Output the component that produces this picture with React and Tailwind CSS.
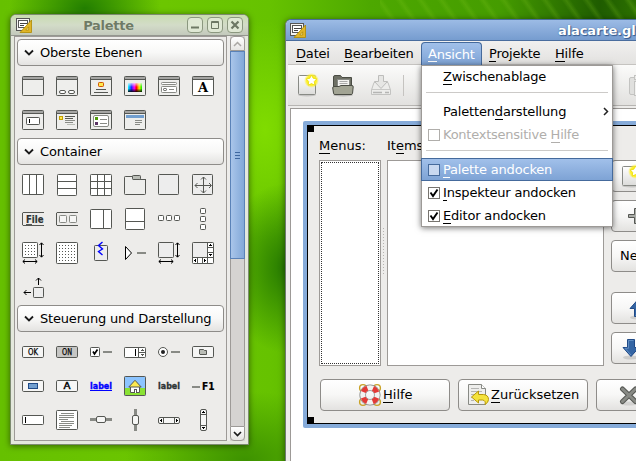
import React from "react";

const INK = "#555753";

/* ---------- palette icons, each drawn in a 34x34 cell ---------- */

const Box = ({ x, y, w, h, fill = "none", stroke = INK, r = 0.8 }) => (
  <rect x={x + 0.5} y={y + 0.5} width={w - 1} height={h - 1} rx={r} fill={fill} stroke={stroke} />
);
const Bar = ({ x, y, w, h = 1, fill = INK }) => (
  <rect x={x} y={y} width={w} height={h} fill={fill} shapeRendering="crispEdges" />
);
const Frame = ({ fill = "#eeeeec", children }) => (
  <>
    <Box x={6} y={7} w={22} h={20} fill={fill} />
    <Bar x={7} y={8} w={20} h={2} fill="#a5a5a3" />
    <Bar x={7} y={10} w={20} />
    {children}
  </>
);
const Label = ({ x, y, size, children, fill = "#2e3436", bold = true, length, weight = 0 }) => (
  <text
    x={x}
    y={y}
    fontSize={size}
    fontWeight={bold ? 700 : 400}
    fill={fill}
    stroke={fill}
    strokeWidth={weight}
    fontFamily="DejaVu Sans, sans-serif"
    textLength={length}
    lengthAdjust="spacingAndGlyphs"
  >
    {children}
  </text>
);
const Dots = ({ x, y, n }) => {
  const out = [];
  for (let i = 0; i < n; i++)
    for (let j = 0; j < n; j++) out.push(<Bar key={i + "-" + j} x={x + i * 3} y={y + j * 3} w={1} />);
  return <>{out}</>;
};
const VArrow = ({ x, y, h }) => (
  <path
    d={`M${x} ${y + 1}V${y + h - 1}M${x - 2} ${y + 3}L${x} ${y + 0.8}L${x + 2} ${y + 3}M${x - 2} ${y + h - 3}L${x} ${y + h - 0.8}L${x + 2} ${y + h - 3}`}
    fill="none"
    stroke="#000"
  />
);
const HArrow = ({ x, y, w }) => (
  <path
    d={`M${x + 1} ${y}H${x + w - 1}M${x + 3} ${y - 2}L${x + 0.8} ${y}L${x + 3} ${y + 2}M${x + w - 3} ${y - 2}L${x + w - 0.8} ${y}L${x + w - 3} ${y + 2}`}
    fill="none"
    stroke="#000"
  />
);

const topLevel = [
  <Frame />,
  <Frame>
    <Box x={9} y={21} w={7} h={4} fill="#fff" r={1.5} />
    <Box x={18} y={21} w={7} h={4} fill="#fff" r={1.5} />
  </Frame>,
  <Frame>
    <Box x={14} y={13} w={6} h={5} fill="#fce94f" stroke="#d35400" />
    <Bar x={12} y={20} w={10} />
    <Bar x={10} y={23} w={14} />
  </Frame>,
  <Frame>
    <defs>
      <linearGradient id="hue">
        <stop offset="0" stopColor="#0ff" />
        <stop offset="0.25" stopColor="#22f" />
        <stop offset="0.45" stopColor="#f0f" />
        <stop offset="0.6" stopColor="#f00" />
        <stop offset="0.8" stopColor="#fe0" />
        <stop offset="1" stopColor="#0e0" />
      </linearGradient>
      <linearGradient id="dark" x2="0" y2="1">
        <stop offset="0" stopColor="#fff" stopOpacity=".75" />
        <stop offset="0.45" stopColor="#fff" stopOpacity="0" />
        <stop offset="0.6" stopColor="#000" stopOpacity="0" />
        <stop offset="1" stopColor="#000" stopOpacity=".9" />
      </linearGradient>
    </defs>
    <rect x="10" y="14" width="14" height="9" fill="url(#hue)" />
    <rect x="10" y="14" width="14" height="9" fill="url(#dark)" />
  </Frame>,
  <Frame>
    <Box x={9} y={13} w={16} h={3} fill="#fff" stroke="#888a85" />
    <Box x={9} y={17} w={16} h={7} fill="#fff" stroke="#888a85" />
    <Box x={11} y={19} w={4} h={3} fill="#fff" />
    <Bar x={17} y={20} w={5} fill="#888a85" />
  </Frame>,
  <Frame fill="#fff">
    <text x="17" y="23" fontSize="13" fontWeight="700" textAnchor="middle" fontFamily="DejaVu Serif, serif" fill="#000">
      A
    </text>
  </Frame>,
  <Frame>
    <Box x={10} y={14} w={14} h={8} fill="#fff" />
    <Bar x={13} y={16} w={1} h={4} fill="#000" />
  </Frame>,
  <Frame>
    <Box x={9} y={13} w={4} h={4} fill="#fce94f" stroke="#c4a000" r={0} />
    <Bar x={15} y={13} w={10} />
    <Bar x={15} y={15} w={8} />
    <Bar x={15} y={17} w={10} fill="#888a85" />
    <Bar x={15} y={19} w={8} fill="#888a85" />
    <Bar x={17} y={21} w={8} fill="#babdb6" />
  </Frame>,
  <Frame>
    <Box x={9} y={12} w={16} h={12} fill="#fff" stroke="#888a85" r={1.5} />
    <Bar x={11} y={14} w={3} h={3} fill="#4e9a06" />
    <Bar x={11} y={19} w={3} h={3} fill="#5c3566" />
    <Bar x={16} y={16} w={7} fill="#888a85" />
    <Bar x={16} y={20} w={7} fill="#888a85" />
  </Frame>,
  <Frame>
    <Bar x={8} y={12} w={18} h={3} fill="#729fcf" />
    <Bar x={17} y={17} w={7} fill="#888a85" />
    <Bar x={17} y={19} w={7} fill="#888a85" />
    <Bar x={17} y={21} w={5} fill="#888a85" />
  </Frame>,
];

const container = [
  <>
    <Box x={6} y={6} w={22} h={21} fill="#fff" />
    <Bar x={13} y={7} w={1} h={19} />
    <Bar x={20} y={7} w={1} h={19} />
  </>,
  <>
    <Box x={7} y={6} w={20} h={22} fill="#fff" />
    <Bar x={8} y={13} w={18} />
    <Bar x={8} y={20} w={18} />
  </>,
  <>
    <Box x={6} y={6} w={22} h={22} fill="#fff" />
    <Bar x={13} y={7} w={1} h={20} />
    <Bar x={20} y={7} w={1} h={20} />
    <Bar x={7} y={13} w={20} />
    <Bar x={7} y={20} w={20} />
  </>,
  <>
    <Box x={6} y={8} w={22} h={19} fill="#eeeeec" />
    <Bar x={15} y={7} w={13} h={4} fill="#edecea" />
    <Bar x={15} y={11} w={12} />
    <Bar x={27} y={12} w={1} h={3} />
    <Box x={14} y={7} w={9} h={5} fill="#babdb6" />
  </>,
  <Box x={6} y={6} w={21} h={21} fill="#ededed" />,
  <>
    <Box x={6} y={6} w={21} h={21} fill="#ededed" />
    <path
      d="M17.5 9V25M9 17.5H25M15 11.5L17.5 9L20 11.5M15 22.5L17.5 25L20 22.5M11.5 15L9 17.5L11.5 20M23 15L25.5 17.5L23 20"
      stroke={INK}
      fill="none"
    />
  </>,
  <>
    <path d="M28 10.5H7L6.5 11V23L7 23.5H28" fill="none" stroke={INK} />
    <Label x={10} y={21} size={10} length={17.5} weight={0.2}>
      File
    </Label>
    <Bar x={10} y={22} w={6} />
  </>,
  <>
    <path d="M28 10.5H7L6.5 11V23L7 23.5H28" fill="none" stroke={INK} />
    <Box x={9} y={13} w={8} h={8} stroke="#888a85" fill="#f6f6f5" />
    <Box x={19} y={13} w={8} h={8} stroke="#888a85" fill="#f6f6f5" />
  </>,
  <>
    <Box x={6} y={7} w={22} h={20} fill="#fff" />
    <Bar x={19} y={8} w={1} h={18} />
  </>,
  <>
    <Box x={7} y={6} w={20} h={22} fill="#fff" />
    <Bar x={8} y={19} w={18} />
  </>,
  <>
    <Box x={6} y={13} w={6} h={6} fill="#fff" />
    <Box x={14} y={13} w={6} h={6} fill="#fff" />
    <Box x={22} y={13} w={6} h={6} fill="#fff" />
  </>,
  <>
    <Box x={14} y={6} w={6} h={6} fill="#fff" />
    <Box x={14} y={14} w={6} h={6} fill="#fff" />
    <Box x={14} y={22} w={6} h={6} fill="#fff" />
  </>,
  <>
    <Box x={6} y={6} w={16} h={16} fill="#fff" />
    <Dots x={9} y={9} n={4} />
    <VArrow x={25.5} y={6} h={16} />
    <HArrow x={6} y={25.5} w={16} />
  </>,
  <>
    <Box x={6} y={6} w={22} h={22} fill="#fff" />
    <Dots x={9} y={9} n={6} />
  </>,
  <>
    <Box x={10} y={9} w={14} h={16} fill="#ededed" />
    <path d="M18.500 6L14.500 9.500L18.500 13L14.500 15.500L18.500 19" fill="none" stroke="#00f" strokeWidth="1.400" />
  </>,
  <>
    <path d="M7.500 10.500V23.500L13.500 17Z" fill="#fff" stroke="#000" />
    <Bar x={19} y={16} w={9} h={2} fill="#888a85" />
  </>,
  <>
    <Box x={6} y={6} w={16} h={16} fill="#ededed" />
    <VArrow x={25.5} y={6} h={16} />
    <HArrow x={6} y={25.5} w={16} />
  </>,
  <>
    <Box x={6} y={6} w={22} h={22} fill="#fff" />
    <Bar x={7} y={7} w={14} h={14} fill="#ededed" />
    <Bar x={21} y={6} w={1} h={22} />
    <Bar x={6} y={21} w={22} />
    <Bar x={22} y={11} w={5} />
    <Bar x={22} y={16} w={5} />
    <Bar x={11} y={22} w={1} h={5} />
    <Bar x={16} y={22} w={1} h={5} />
    <Bar x={24} y={8} w={1} fill="#000" />
    <Bar x={23} y={9} w={3} fill="#000" />
    <Bar x={23} y={18} w={3} fill="#000" />
    <Bar x={24} y={19} w={1} fill="#000" />
    <Bar x={9} y={23} w={1} h={3} fill="#000" />
    <Bar x={8} y={24} w={1} fill="#000" />
    <Bar x={18} y={23} w={1} h={3} fill="#000" />
    <Bar x={19} y={24} w={1} fill="#000" />
  </>,
  <>
    <path d="M22.500 15V8M20 10.500L22.500 8L25 10.500M15 22.500H8M10.500 20L8 22.500L10.500 25" fill="none" stroke="#000" />
    <Box x={17} y={17} w={11} h={11} fill="#ededed" />
  </>,
];

const PushButton = ({ fill = "#f6f6f5", children }) => (
  <>
    <Box x={6} y={11} w={22} h={12} fill={fill} r={1.2} />
    {children}
  </>
);

const widgets = [
  <PushButton>
    <Label x={12} y={20} size={8} bold={false} length={10} fill="#000" weight={0.25}>
      OK
    </Label>
  </PushButton>,
  <PushButton fill="#c6c6c4">
    <Label x={12} y={20} size={8} bold={false} length={10} fill="#000" weight={0.25}>
      ON
    </Label>
  </PushButton>,
  <>
    <Box x={6} y={12} w={10} h={10} fill="#fff" />
    <path d="M9 16.500L10.500 19L13.500 14.500" fill="none" stroke="#000" strokeWidth="1.700" />
    <Bar x={19} y={16} w={9} h={2} fill="#888a85" />
  </>,
  <>
    <Box x={6} y={12} w={22} h={11} fill="#fff" />
    <Bar x={17} y={14} w={1} h={7} fill="#000" />
    <Bar x={20} y={13} w={1} h={9} />
    <Bar x={21} y={17} w={6} />
    <Bar x={24} y={14} w={1} />
    <Bar x={23} y={15} w={3} />
    <Bar x={23} y={19} w={3} />
    <Bar x={24} y={20} w={1} />
  </>,
  <>
    <circle cx="11" cy="17" r="4.5" fill="#fff" stroke={INK} />
    <circle cx="11" cy="17" r="2" fill="#222" />
    <Bar x={19} y={16} w={9} h={2} fill="#888a85" />
  </>,
  <PushButton>
    <path d="M13.500 19V14.500H17.500L18.500 15.500H20.500V19.500H14Z" fill="#babdb6" stroke={INK} />
  </PushButton>,
  <PushButton>
    <Box x={12} y={14} w={10} h={6} fill="#729fcf" stroke="#204a87" r={0} />
  </PushButton>,
  <PushButton>
    <Label x={13.5} y={20} size={8} bold={false} weight={0.4} fill="#000" length={7}>
      A
    </Label>
  </PushButton>,
  <>
    <Label x={6} y={20} size={9.5} fill="#00f" length={22} weight={0.35}>
      label
    </Label>
    <Bar x={6} y={21} w={22} fill="#00f" />
  </>,
  <>
    <Box x={6} y={7} w={22} h={20} fill="#8cc4ff" />
    <Bar x={7} y={19} w={20} h={7} fill="#8ae234" />
    <path d="M12.500 17V23.500H21.500V17L17 13Z" fill="#fff" stroke={INK} />
    <path d="M10.800 18L17 11.300L23.200 18Z" fill="#fce94f" stroke={INK} />
    <Bar x={16} y={20} w={3} h={4} fill={INK} />
    <Bar x={17} y={21} w={1} h={3} fill="#fff" />
  </>,
  <Label x={6} y={20} size={9.5} length={22} weight={0.35}>
    label
  </Label>,
  <>
    <Bar x={6} y={17} w={8} h={2} fill="#888a85" />
    <Label x={16} y={21} size={11} fill="#000" length={12.5} weight={0.2}>
      F1
    </Label>
  </>,
  <>
    <Box x={6} y={12} w={22} h={10} fill="#fff" />
    <Bar x={9} y={14} w={1} h={6} fill="#000" />
  </>,
  <>
    <Box x={6} y={7} w={22} h={20} fill="#fff" />
    <Bar x={11} y={10} w={13} fill="#888a85" />
    <Bar x={9} y={12} w={15} fill="#888a85" />
    <Bar x={9} y={14} w={15} fill="#888a85" />
    <Bar x={9} y={16} w={9} fill="#888a85" />
    <Bar x={11} y={18} w={13} fill="#888a85" />
    <Bar x={9} y={20} w={15} fill="#888a85" />
    <Bar x={9} y={22} w={13} fill="#888a85" />
    <Bar x={9} y={24} w={11} fill="#888a85" />
  </>,
  <>
    <Bar x={6} y={15} w={22} h={3} fill="#888a85" />
    <Box x={12} y={13} w={10} h={7} fill="#f6f6f5" r={1.5} />
  </>,
  <>
    <Bar x={16} y={6} w={3} h={22} fill="#888a85" />
    <Box x={14} y={12} w={7} h={10} fill="#f6f6f5" r={1.5} />
  </>,
  <>
    <Box x={6} y={14} w={22} h={7} fill="#f6f6f5" r={1.5} />
    <Bar x={11} y={15} w={1} h={5} />
    <Bar x={22} y={15} w={1} h={5} />
    <Bar x={9} y={16} w={1} h={3} fill="#000" />
    <Bar x={8} y={17} w={1} fill="#000" />
    <Bar x={24} y={16} w={1} h={3} fill="#000" />
    <Bar x={25} y={17} w={1} fill="#000" />
  </>,
  <>
    <Box x={14} y={6} w={7} h={22} fill="#f6f6f5" r={1.5} />
    <Bar x={15} y={11} w={5} />
    <Bar x={15} y={22} w={5} />
    <Bar x={16} y={9} w={3} fill="#000" />
    <Bar x={17} y={8} w={1} fill="#000" />
    <Bar x={16} y={24} w={3} fill="#000" />
    <Bar x={17} y={25} w={1} fill="#000" />
  </>,
];

/* ---------- larger icons ---------- */

const GladeIcon = () => (
  <svg width="16" height="16" viewBox="0 0 16 16">
    <rect x=".5" y="1.5" width="13" height="12" fill="#f4f4f2" stroke="#555" />
    <rect x="2.5" y="3.5" width="9" height="7" fill="#fff" stroke="#555" />
    <path d="M4 6.500H11M4 8.500H8" stroke="#444" fill="none" />
    <path d="M15.500 3V15.500H4Z" fill="#e0b528" stroke="#b08a00" strokeWidth=".8" />
    <path d="M12.700 9.800V13H9.700Z" fill="#f6e9a8" stroke="#b08a00" strokeWidth=".8" />
  </svg>
);

const NewIcon = () => (
  <svg width="24" height="24" viewBox="0 0 24 24">
    <defs>
      <radialGradient id="glow">
        <stop offset="0" stopColor="#fff600" />
        <stop offset=".65" stopColor="#fdf02a" />
        <stop offset="1" stopColor="#fff04a" stopOpacity="0" />
      </radialGradient>
      <linearGradient id="page" x2="0" y2="1">
        <stop offset="0" stopColor="#fff" />
        <stop offset="1" stopColor="#dcdcda" />
      </linearGradient>
    </defs>
    <ellipse cx="11" cy="22" rx="9" ry="1.500" fill="#000" opacity=".15" />
    <rect x="2.500" y="2.500" width="17" height="19" rx="1" fill="url(#page)" stroke="#888a85" />
    <circle cx="15.500" cy="7.500" r="7.500" fill="url(#glow)" />
    <path d="M15.500 2l1.700 3.300 3.600.5-2.500 2.700.5 3.700-3.300-1.600-3.300 1.600.5-3.700-2.500-2.700 3.600-.5z" fill="#fff" stroke="#eadb00" strokeWidth=".8" />
  </svg>
);

const OpenIcon = () => (
  <svg width="24" height="24" viewBox="0 0 24 24">
    <ellipse cx="12" cy="22" rx="10" ry="1.500" fill="#000" opacity=".2" />
    <path d="M2.500 20V4Q2.500 2.500 4 2.500H9.500L11 4.500H20.500V20Z" fill="#6e7065" stroke="#4a4c44" />
    <rect x="6.500" y="6.500" width="12" height="9" fill="#f3f3f1" stroke="#888a85" />
    <path d="M8.500 8.500H16.500M8.500 10.500H16.500" stroke="#aaa" />
    <path d="M1.700 15Q1.700 13.500 3 13.500H8L10 12.500H21Q22.300 12.500 22.200 14L21.500 20.500Q21.300 21.500 20 21.500H4Q2.800 21.500 2.600 20.500Z" fill="#a2a494" stroke="#4a4c44" />
  </svg>
);

const SaveIcon = () => (
  <svg width="24" height="24" viewBox="0 0 24 24">
    <path d="M2.500 17L5 9.500H19L21.500 17V21.500H2.500Z" fill="#ededeb" stroke="#c3c3c1" />
    <path d="M3 16.500H21" stroke="#c9c9c7" />
    <path d="M4 19.500H13M16 19.500H20" stroke="#b5b5b3" strokeWidth="1.500" />
    <path d="M9.500 2.500H14.500V8.500H18.500L12 15.500L5.500 8.500H9.500Z" fill="#e6e6e4" stroke="#bdbdbb" />
  </svg>
);

const PasteIcon = () => (
  <svg width="24" height="24" viewBox="0 0 24 24">
    <rect x="1.500" y="4.500" width="17" height="17" rx="1.500" fill="#e0e0de" stroke="#c3c3c1" />
    <rect x="6.500" y="2.500" width="9" height="4" fill="#ededeb" stroke="#c3c3c1" />
    <rect x="6.500" y="8.500" width="15" height="14" fill="#f3f3f1" stroke="#c3c3c1" />
  </svg>
);

const PlusIcon = () => (
  <svg width="24" height="24" viewBox="0 0 24 24">
    <path d="M10.500 4.500H13.500V10.500H19.500V13.500H13.500V19.500H10.500V13.500H4.500V10.500H10.500Z" fill="#aaaca7" stroke="#555753" />
  </svg>
);

const ArrowIcon = ({ down }) => (
  <svg width="24" height="24" viewBox="0 0 24 24">
    <ellipse cx="12" cy="21.500" rx="8" ry="2" fill="#000" opacity=".12" />
    <g transform={down ? "rotate(180 12 12)" : undefined}>
      <path d="M12 3.500L20 12.500H15.500V20.500H8.500V12.500H4Z" fill="#3465a4" stroke="#204a87" />
      <path d="M12 5L18 11.700H14.500V19.500H9.500" fill="none" stroke="#729fcf" strokeWidth=".7" />
    </g>
  </svg>
);

const CloseIcon = () => (
  <svg width="24" height="24" viewBox="0 0 24 24">
    <ellipse cx="12" cy="20.500" rx="9" ry="2" fill="#000" opacity=".1" />
    <path d="M5.500 6L18.500 18.500M18.500 6L5.500 18.500" stroke="#555753" strokeWidth="5" strokeLinecap="round" />
    <path d="M5.500 6L18.500 18.500M18.500 6L5.500 18.500" stroke="#888a85" strokeWidth="3" strokeLinecap="round" />
  </svg>
);

const HelpIcon = () => (
  <svg width="24" height="24" viewBox="0 0 24 24">
    <g fill="none" stroke="#c9a227" strokeWidth="1.400">
      <circle cx="5" cy="5" r="3.400" />
      <circle cx="19" cy="5" r="3.400" />
      <circle cx="5" cy="19" r="3.400" />
      <circle cx="19" cy="19" r="3.400" />
    </g>
    <circle cx="12" cy="12" r="7.300" fill="none" stroke="#8b8b89" strokeWidth="6.600" />
    <circle cx="12" cy="12" r="7.300" fill="none" stroke="#f2f2f0" strokeWidth="5" />
    <circle cx="12" cy="12" r="7.300" fill="none" stroke="#e33a36" strokeWidth="5.200" strokeDasharray="5.733 5.733" strokeDashoffset="-2.867" />
  </svg>
);

const RevertIcon = () => (
  <svg width="24" height="24" viewBox="0 0 24 24">
    <path d="M2.500 1.500H15.500L19.500 5.500V21.500H2.500Z" fill="#eeeeec" stroke="#888a85" />
    <path d="M15.500 1.500V5.500H19.500" fill="#fff" stroke="#888a85" />
    <path d="M5 5.500H13M5 8.500H16M5 11.500H9M5 14.500H8M5 17.500H8" stroke="#b5b5b3" />
    <path d="M5.500 14L12.500 8V11.500H17.500Q22.500 12 22.500 16.500Q22.500 19.500 19 21.500Q20 17.500 16.500 17H12.500V20Z" fill="#f4e23c" stroke="#b8980a" />
  </svg>
);

/* ---------- palette window ---------- */

const TitleButton = ({ children }) => (
  <div className="flex h-4 w-4 items-center justify-center rounded-[4px] border border-[#8b987f] bg-[#dfe8d4]">
    <svg width="14" height="14" viewBox="0 0 14 14" fill="none" stroke="#6d7864">
      {children}
    </svg>
  </div>
);

const Section = ({ title, icons }) => (
  <section className="pb-px">
    <header className="mb-[3px] flex h-[27px] items-center rounded-[4px] border border-[#8e8c89] bg-linear-to-b from-white via-[#f8f8f7] to-[#e4e3e1] pl-[6px]">
      <svg width="10" height="8" viewBox="0 0 10 8">
        <path d="M1 1.500L5 5.500L9 1.500" fill="none" stroke="#1a1a1a" strokeWidth="1.800" />
      </svg>
      <span className="ml-[6px] tracking-[-0.18px] whitespace-nowrap">{title}</span>
    </header>
    <div className="-ml-px grid grid-cols-[repeat(6,34px)]">
      {icons.map((icon, i) => (
        <svg key={i} width="34" height="34" viewBox="0 0 34 34">
          {icon}
        </svg>
      ))}
    </div>
  </section>
);

const Palette = () => (
  <div className="absolute top-[14px] left-[10px] flex h-[431px] w-[239px] flex-col rounded-t-[6px] border border-[#7d8b70] bg-[#e4e8dd] shadow-[0_1px_6px_rgba(0,0,0,0.5)]">
    <div className="flex h-[21px] shrink-0 items-center rounded-t-[5px] border-b border-[#94968f] bg-linear-to-b from-[#c9dcb0] via-[#d3dcc8] to-[#c3c9bc] pr-[5px] pl-[5px]">
      <GladeIcon />
      <span className="flex-1 pt-[2px] pr-[2px] text-center font-bold tracking-[-0.25px] text-[#6f7b66] [text-shadow:0_0_1px_#e6eedd]">Palette</span>
      <div className="flex gap-1">
        <TitleButton>
          <path d="M3 9.500H11" strokeWidth="2" />
        </TitleButton>
        <TitleButton>
          <path d="M3.500 3.500H10.500V10.500H3.500ZM3 4.500H11" />
        </TitleButton>
        <TitleButton>
          <path d="M3.500 3.500L10.500 10.500M10.500 3.500L3.500 10.500" strokeWidth="2.200" />
        </TitleButton>
      </div>
    </div>
    <div className="mx-[3px] mb-[3px] flex min-h-0 flex-1 gap-[3px] bg-[#edecea]">
      <div className="w-[213px] overflow-hidden border border-[#9d9a97] px-[2px] pt-[2px]">
        <Section title="Oberste Ebenen" icons={topLevel} />
        <Section title="Container" icons={container} />
        <Section title="Steuerung und Darstellung" icons={widgets} />
      </div>
      <div className="flex w-[15px] flex-col bg-[#d5d3d1]">
        <div className="flex h-[15px] items-center justify-center rounded-t-[4px] border border-[#9d9a97] bg-linear-to-b from-white to-[#e6e5e3]">
          <svg width="9" height="6" viewBox="0 0 9 6">
            <path d="M1 5L4.500 1.500L8 5" fill="none" stroke="#aaa7a4" strokeWidth="1.500" />
          </svg>
        </div>
        <div className="flex h-[208px] flex-col items-center justify-center gap-[2px] border border-[#5a82b8] bg-linear-to-r from-[#a9c5ea] to-[#82a8d8]">
          <i className="h-px w-[5px] bg-[#3f68a0]" />
          <i className="h-px w-[5px] bg-[#3f68a0]" />
          <i className="h-px w-[5px] bg-[#3f68a0]" />
        </div>
        <div className="flex-1 border-x border-[#9d9a97]" />
        <div className="flex h-[15px] items-center justify-center rounded-b-[4px] border border-[#9d9a97] bg-linear-to-b from-white to-[#e6e5e3]">
          <svg width="9" height="6" viewBox="0 0 9 6">
            <path d="M1 1L4.500 4.500L8 1" fill="none" stroke="#1a1a1a" strokeWidth="1.700" />
          </svg>
        </div>
      </div>
    </div>
  </div>
);

/* ---------- main window ---------- */

const M = ({ children }) => <span className="border-b border-current">{children}</span>;

const Button = ({ className, children }) => (
  <div
    className={
      "flex h-8 shrink-0 items-center rounded-[4px] border border-[#8e8c89] bg-linear-to-b from-white via-[#f7f7f6] to-[#e3e2e0] leading-[14px] whitespace-nowrap " +
      className
    }
  >
    {children}
  </div>
);

const MainWindow = () => (
  <div className="absolute top-[19px] left-[285px] flex h-[460px] w-[640px] flex-col rounded-t-[6px] border border-[#4a6d9e] border-l-[#6f7a72] bg-[#edecea] shadow-[0_1px_6px_rgba(0,0,0,0.5)]">
    <div className="flex h-[21px] shrink-0 items-center rounded-t-[5px] border-b border-[#4a6d9e] bg-linear-to-b from-[#9cbbe5] to-[#769ccf] pl-[4px]">
      <GladeIcon />
      <span className="ml-[252px] pt-px font-bold tracking-[-0.1px] whitespace-nowrap text-white [text-shadow:0_0_1px_#33598c,1px_1px_1px_#33598c]">alacarte.glade</span>
    </div>
    <nav className="ml-[2px] flex h-6 shrink-0 items-stretch border-b border-[#c5c3c0] bg-linear-to-b from-[#f1f0ef] to-[#e3e2e0] leading-[14px] tracking-[-0.18px]">
      <span className="w-[48px] self-center pt-[2px] pl-[8px]"><M>D</M>atei</span>
      <span className="w-[85px] self-center pt-[2px] pl-[8px]"><M>B</M>earbeiten</span>
      <span className="mt-px flex h-[23px] w-[61px] items-center rounded-t-[4px] border border-b-0 border-[#456a9c] bg-linear-to-b from-[#a1c0ea] to-[#7ea3d5] pt-px pl-[6px] text-white">
        <M>A</M>nsicht
      </span>
      <span className="w-[66px] self-center pt-[2px] pl-[7px]"><M>P</M>rojekte</span>
      <span className="self-center pt-[2px] pl-[7px]"><M>H</M>ilfe</span>
    </nav>
    <div className="ml-[2px] flex h-[41px] shrink-0 items-center border-b border-[#b7b5b2] bg-linear-to-b from-[#fbfbfa] to-[#e2e1df] pl-[8px]">
      <NewIcon />
      <span className="w-[11px]" />
      <OpenIcon />
      <span className="w-[14px]" />
      <SaveIcon />
      <span className="ml-[10px] h-[21px] w-px bg-[#c5c3c0]" />
      <span className="w-[224px]" />
      <PasteIcon />
    </div>
    <div className="mt-[2px] ml-[4px] flex-1 border border-[#9d9a97] bg-white pt-[12px] pl-[12px]">
      <div className="h-[307px] w-[600px] rounded-[2px] bg-[#86abd9] p-[4px]">
        <div className="relative flex h-full flex-col border border-black bg-[#edecea] pt-[13px] pl-[11px]">
          <i className="absolute -top-px -left-px h-[7px] w-[7px] bg-black" />
          <i className="absolute -bottom-px -left-px h-[7px] w-[7px] bg-black" />
          <div className="flex h-[21px] leading-[14px]">
            <span className="w-[68px]"><M>M</M>enus:</span>
            <span>It<M>e</M>ms:</span>
          </div>
          <div className="flex h-[206px]">
            <div className="h-[206px] w-[62px] border border-[#9d9a97] bg-white p-px">
              <div className="h-full w-full border border-dotted border-[#333]" />
            </div>
            <div className="flex w-[6px] flex-col justify-center" />
            <div className="h-[206px] w-[217px] border border-[#9d9a97] bg-white pt-[66px]">
              <div className="-ml-[6px] h-[48px] w-[4px] bg-[radial-gradient(circle,#b5b3b0_0.7px,transparent_1px)] bg-[size:3px_3px]" />
            </div>
            <div className="ml-[7px] flex flex-col">
              <Button className="w-[84px] pl-[8px]"><NewIcon /></Button>
              <Button className="mt-2 w-[84px] pl-[12px]"><PlusIcon /></Button>
              <Button className="mt-2 w-[84px] pl-[8px]">Neues</Button>
              <Button className="mt-5 w-[85px] pl-[14px]"><ArrowIcon /></Button>
              <Button className="mt-2 w-[85px] pl-[7px]"><ArrowIcon down /></Button>
            </div>
          </div>
          <div className="mt-[13px] ml-px flex gap-[8px]">
            <Button className="w-[130px] pl-[37px]"><HelpIcon /><span className="ml-px"><M>H</M>ilfe</span></Button>
            <Button className="w-[130px] pl-[7px]"><RevertIcon /><span className="ml-px"><M>Z</M>urücksetzen</span></Button>
            <Button className="w-[130px] pl-[20px]"><CloseIcon /></Button>
          </div>
        </div>
      </div>
    </div>
  </div>
);

/* ---------- open menu ---------- */

const Check = ({ on, className }) => (
  <span className={"flex h-3 w-3 shrink-0 items-center justify-center border " + className}>
    {on && (
      <svg width="10" height="10" viewBox="0 0 10 10">
        <path d="M1.500 4.500L4 8L8.500 1.500" fill="none" stroke="#000" strokeWidth="1.900" />
      </svg>
    )}
  </span>
);

const Menu = () => (
  <div className="absolute top-[65px] left-[421px] w-[192px] border border-[#9d9a97] bg-white leading-[14px] tracking-[-0.18px] whitespace-nowrap shadow-[0_1px_6px_rgba(0,0,0,0.55)]">
    <div className="flex h-[22px] items-center pl-[21px]"><span><M>Z</M>wischenablage</span></div>
    <div className="mx-[4px] mt-[4px] mb-[7px] h-px bg-[#cccac8]" />
    <div className="flex h-[23px] items-center pr-[3px] pl-[21px]">
      <span className="flex-1">Paletten<M>d</M>arstellung</span>
      <svg width="6" height="9" viewBox="0 0 6 9">
        <path d="M1 1L4.500 4.500L1 8" fill="none" stroke="#222" strokeWidth="1.500" />
      </svg>
    </div>
    <div className="flex h-[23px] items-center gap-[3px] pl-[6px] tracking-[-0.24px] text-[#b0aeab]">
      <Check className="border-[#b0aeab] bg-white" />
      <span>Kontextsensitive <M>H</M>ilfe</span>
    </div>
    <div className="mx-[4px] mt-[4px] mb-[7px] h-px bg-[#cccac8]" />
    <div className="-mx-px flex h-[23px] items-center gap-[3px] border border-[#456a9c] bg-linear-to-b from-[#a1c0ea] to-[#7ea3d5] pl-[6px] text-white">
      <Check className="border-[#456a9c] bg-[#c8d8f0]" />
      <span><M>P</M>alette andocken</span>
    </div>
    <div className="flex h-[23px] items-center gap-[3px] pl-[6px]">
      <Check on className="border-[#77746f] bg-white" />
      <span><M>I</M>nspekteur andocken</span>
    </div>
    <div className="flex h-[22px] items-center gap-[3px] pt-px pl-[6px]">
      <Check on className="border-[#77746f] bg-white" />
      <span><M>E</M>ditor andocken</span>
    </div>
  </div>
);

export default function App() {
  return (
    <div className="relative h-[461px] w-[636px] overflow-hidden bg-[radial-gradient(ellipse_75px_50px_at_85px_8px,#237f00_0%,#237f0000_100%),radial-gradient(ellipse_60px_85px_at_285px_268px,#267a00_0%,#267a0000_100%),radial-gradient(ellipse_120px_70px_at_245px_461px,#3d9200_0%,#3d920000_100%),radial-gradient(ellipse_60px_110px_at_265px_130px,#80dc00_0%,#80dc0000_100%),linear-gradient(90deg,#66c000_0px,#6cc600_165px,#66c200_270px,#4da800_370px,#459c00_500px,#1f5c00_600px,#2c7000_636px)] font-['DejaVu_Sans',sans-serif] text-[13px] text-black">
      <div className="absolute top-0 left-[380px] h-[24px] w-[256px] bg-[repeating-linear-gradient(55deg,transparent_0px,transparent_9px,rgba(130,200,30,0.22)_13px,transparent_17px)]" />
      <Palette />
      <MainWindow />
      <Menu />
    </div>
  );
}
